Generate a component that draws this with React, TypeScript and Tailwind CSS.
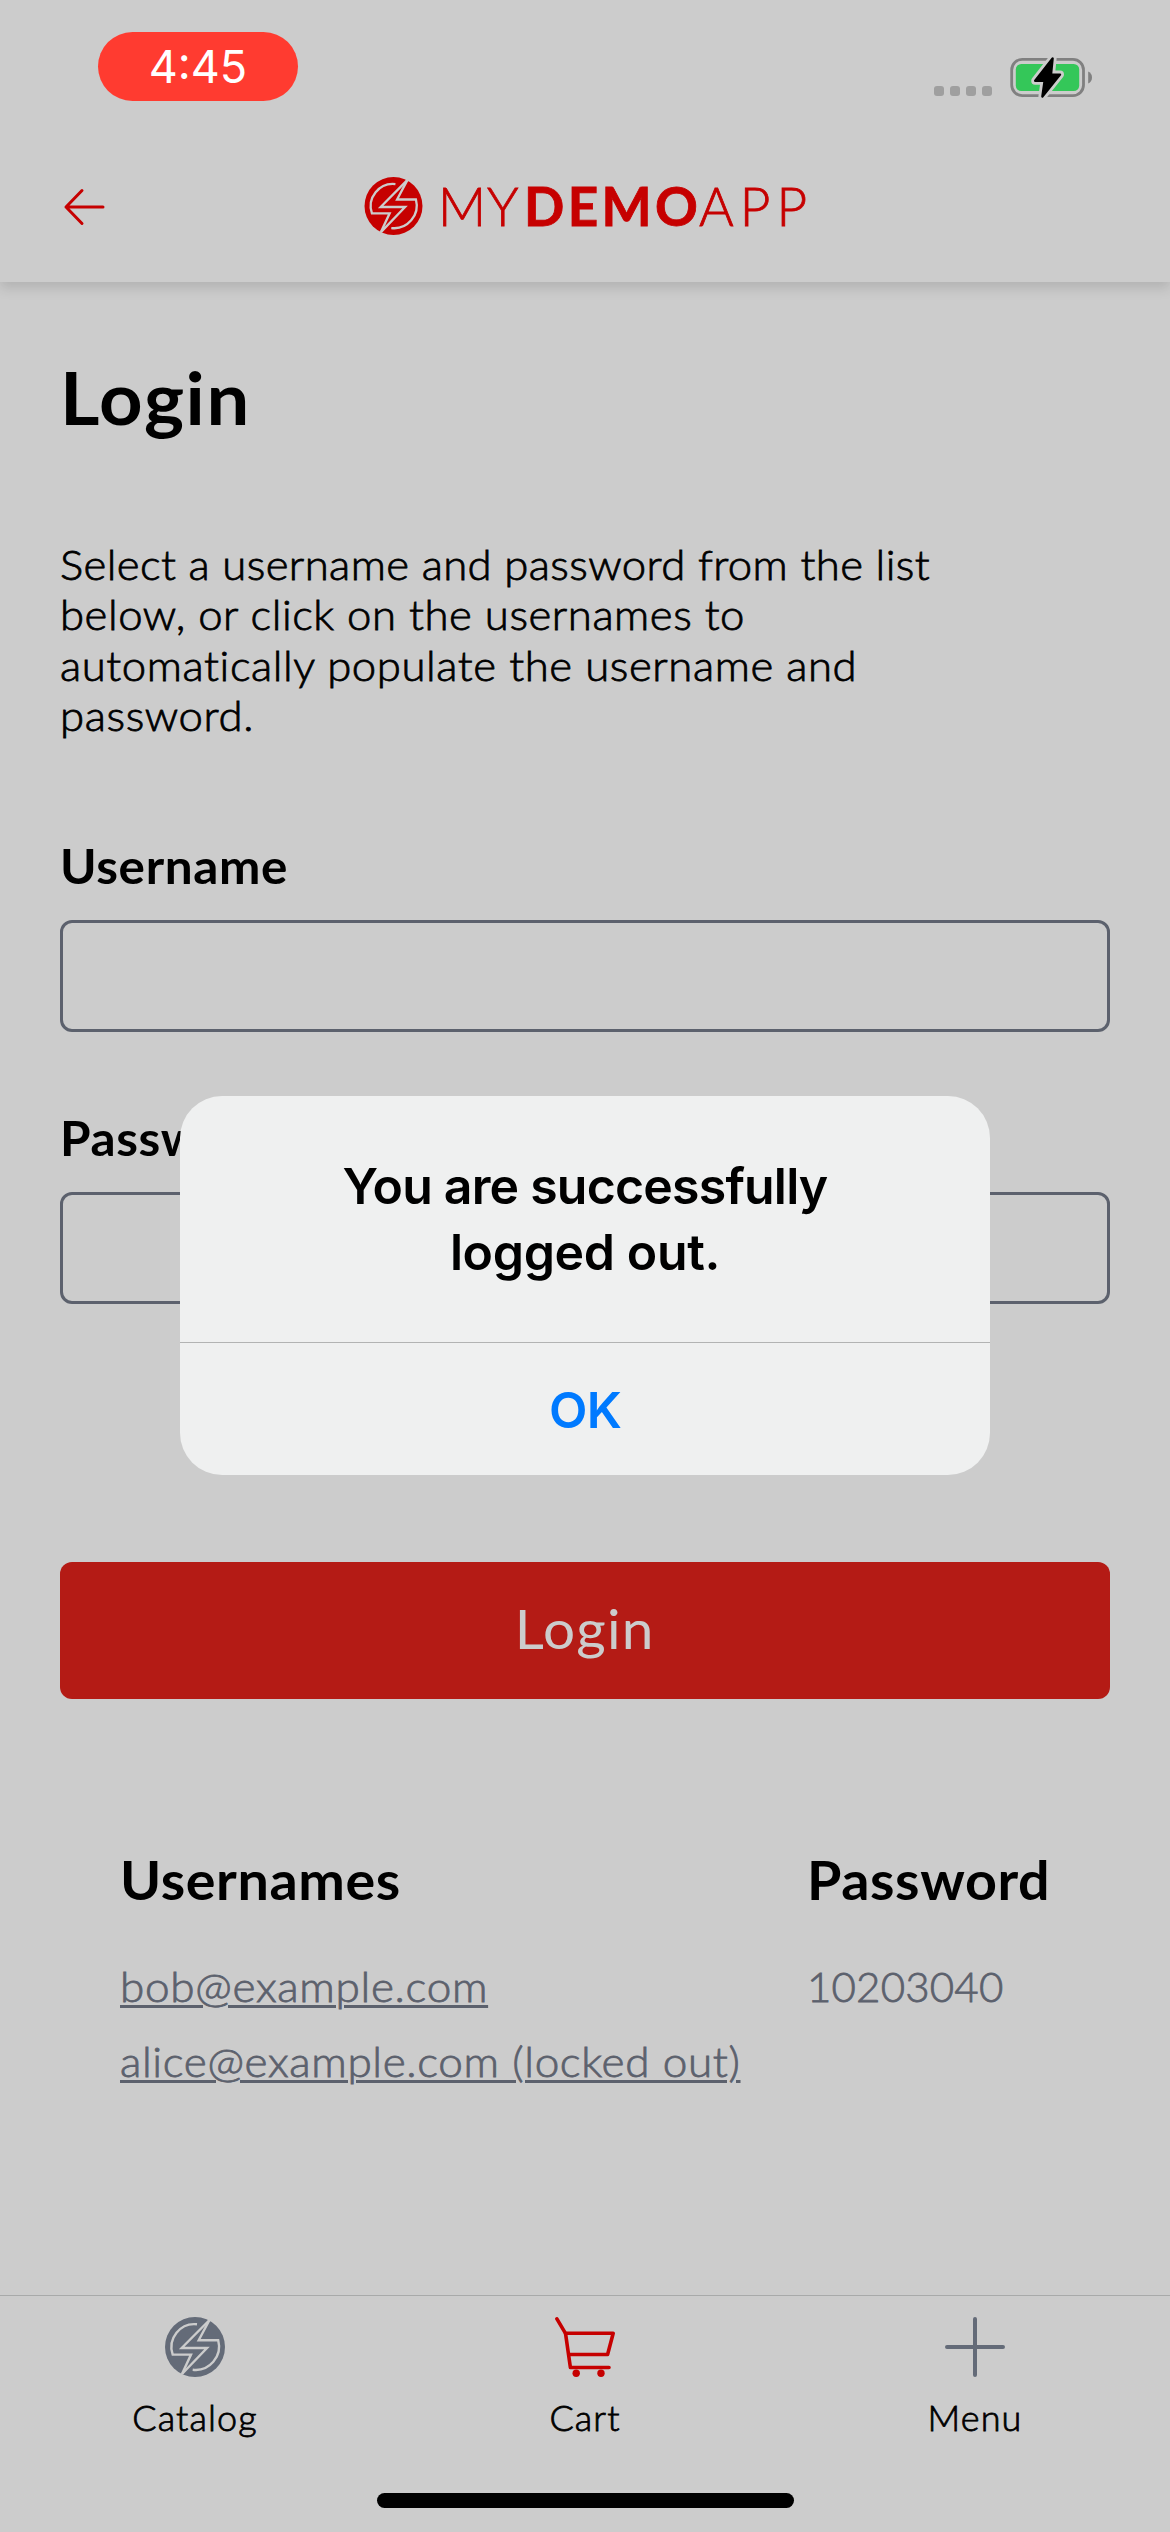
import type { ReactNode } from "react";

const light = "font-light [-webkit-text-stroke:0.8px_currentColor]";

function BoltLogo({ className }: { className: string }) {
  return (
    <svg viewBox="0 0 60 60" className={className}>
      <circle cx="30" cy="30" r="30" fill="currentColor" />
      <g fill="none" stroke="#cccccc" strokeWidth="2.4" strokeLinejoin="miter">
        <path d="M32 7.3A23 23 0 0 0 7.7 37.6H26L17 57" />
        <path d="M44.5 3L16.7 31H42L17 57" />
        <path d="M44.5 3L33.7 23.3H53.2A23.5 23.5 0 0 1 27.7 52.8" />
      </g>
    </svg>
  );
}

function Battery() {
  return (
    <svg viewBox="0 0 86 44" className="h-[44px] w-[86px]">
      <rect x="3.7" y="3.4" width="71.8" height="36.2" rx="10.5" fill="none" stroke="#808080" strokeWidth="2.8" />
      <rect x="7.8" y="8" width="63.4" height="27" rx="5.5" fill="#34c759" />
      <path d="M80.2 15.6c2.6 1 3.8 3.4 3.8 6s-1.2 5-3.8 6z" fill="#808080" />
      <path d="M44.6 2.5L43 18.6H52L34.4 40.5L36.6 24.8H27.2Z" fill="#cccccc" stroke="#cccccc" strokeWidth="8" strokeLinejoin="round" />
      <path d="M44.6 2.5L43 18.6H52L34.4 40.5L36.6 24.8H27.2Z" fill="#000" stroke="#000" strokeWidth="2.4" strokeLinejoin="round" />
    </svg>
  );
}

function StatusBar() {
  return (
    <div className="flex h-[132px] items-start justify-between pl-[98px] pr-[76px]">
      <div className="mt-8 flex h-[69px] w-[200px] items-center justify-center rounded-[35px] bg-[#ff3b30] font-['Inter',sans-serif] text-[45px] leading-[54px] text-white">
        4:45
      </div>
      <div className="mt-[56px] flex items-start">
        <div className="mr-4 mt-[30px] flex gap-1.5">
          <span className="h-2.5 w-2.5 rounded-[3px] bg-[#9f9f9f]" />
          <span className="h-2.5 w-2.5 rounded-[3px] bg-[#9f9f9f]" />
          <span className="h-2.5 w-2.5 rounded-[3px] bg-[#9f9f9f]" />
          <span className="h-2.5 w-2.5 rounded-[3px] bg-[#9f9f9f]" />
        </div>
        <Battery />
      </div>
    </div>
  );
}

function NavBar() {
  return (
    <div className="flex h-[150px] items-start pl-[62px] pt-[45px] text-[#c60000]">
      <svg viewBox="0 0 44 40" className="mr-[258px] mt-[10px] h-[40px] w-[44px]" fill="none" stroke="currentColor" strokeWidth="3" strokeLinecap="round" strokeLinejoin="round">
        <path d="M41 20H4M20 3.500L4 20L20 36.500" />
      </svg>
      <BoltLogo className="h-[58px] w-[59px]" />
      <div className="-mt-[3px] ml-[15px] flex whitespace-nowrap text-[53px] leading-[64px]">
        <span className={`w-[86px] tracking-[1px] ${light}`}>MY</span>
        <span className="w-[175px] font-bold tracking-[3.4px] [-webkit-text-stroke:0.8px_currentColor]">DEMO</span>
        <span className={`tracking-[6px] ${light}`}>APP</span>
      </div>
    </div>
  );
}

function Field({ label }: { label: string }) {
  return (
    <label className="block">
      <span className="block origin-left scale-x-[1.03] text-[48px] font-bold leading-[58px] tracking-[0.6px]">{label}</span>
      <input className="mt-[24.5px] block h-[112px] w-full rounded-[12px] border-[3px] border-[#5c616d] bg-transparent px-6 text-[42px] outline-none" />
    </label>
  );
}

function Tab({ label, children }: { label: string; children: ReactNode }) {
  return (
    <div className="flex flex-1 flex-col items-center">
      {children}
      <span className={`mt-[18px] text-[36px] leading-[44px] tracking-[1.1px] ${light}`}>{label}</span>
    </div>
  );
}

function Dialog() {
  return (
    <div role="dialog" className="absolute left-[180px] top-[1096px] flex h-[379px] w-[810px] flex-col rounded-[42px] bg-[#eff0f0] text-center font-['Inter',sans-serif] text-[50px] font-semibold">
      <div className="h-[247px] border-b border-[#b2b3b3] pt-[57px] leading-[66px]">
        <p className="tracking-[-0.8px]">You are successfully</p>
        <p className="tracking-[-0.35px]">logged out.</p>
      </div>
      <button className="flex-1 pt-0.5 tracking-[-0.8px] text-[#007aff]">OK</button>
    </div>
  );
}

export default function App() {
  return (
    <div className="relative flex h-[2532px] w-[1170px] flex-col overflow-hidden bg-[#cccccc] font-['Lato',sans-serif] text-black">
      <header className="relative h-[282px] shadow-[0_6px_12px_rgba(0,0,0,0.13)]">
        <StatusBar />
        <NavBar />
      </header>

      <main className="flex-1 px-[60px] pt-[70px]">
        <h1 className="origin-left scale-x-[1.04] text-[73px] font-bold leading-[90px] tracking-[1.5px]">Login</h1>
        <p className={`mt-[97px] origin-left scale-x-[1.04] text-[42px] leading-[50.4px] ${light}`}>
          <span className="block tracking-[0.38px]">Select a username and password from the list</span>
          <span className="block tracking-[0.53px]">below, or click on the usernames to</span>
          <span className="block tracking-[0.57px]">automatically populate the username and</span>
          <span className="block tracking-[0.6px]">password.</span>
        </p>
        <div className="mt-[96.500px]">
          <Field label="Username" />
        </div>
        <div className="mt-[77.500px]">
          <Field label="Password" />
        </div>
        <button className="mt-[258px] block h-[137px] w-full rounded-[12px] bg-[#b41b15] pb-[3px] text-[54px] text-[#cccccc]">
          <span className="inline-block scale-x-[1.05] tracking-[1.2px]">Login</span>
        </button>
        <div className="mt-[148px] flex pl-[60px]">
          <section className="w-[687px]">
            <h2 className="origin-left scale-x-[1.03] text-[54px] font-bold leading-[66px] tracking-[0.6px]">Usernames</h2>
            <div className={`mt-[48px] flex flex-col items-start gap-[25px] text-[42px] leading-[50px] text-[#5c616d] underline decoration-[3px] underline-offset-[3px] ${light}`}>
              <span className="origin-left scale-x-[1.05] tracking-[0.65px]">bob@example.com</span>
              <span className="origin-left scale-x-[1.05] tracking-[0.6px]">alice@example.com (locked out)</span>
            </div>
          </section>
          <section>
            <h2 className="origin-left scale-x-[1.03] text-[54px] font-bold leading-[66px] tracking-[0.6px]">Password</h2>
            <p className={`mt-[48px] text-[42px] leading-[50px] tracking-[0.2px] text-[#5c616d] ${light}`}>10203040</p>
          </section>
        </div>
      </main>

      <footer className="h-[237px] border-t border-[#a8aaaa] pt-[21px]">
        <nav className="flex">
          <Tab label="Catalog">
            <BoltLogo className="h-[60px] w-[60px] text-[#646b78]" />
          </Tab>
          <Tab label="Cart">
            <svg viewBox="0 0 60 60" className="h-[60px] w-[60px] text-[#c60000]" fill="none" stroke="currentColor" strokeWidth="3.6" strokeLinecap="round" strokeLinejoin="round">
              <path d="M1.900 1.900L10.500 16.300H58.200L52.600 37.500H14" />
              <path d="M10.500 16.300L15.400 50.500H54" />
              <circle cx="21.200" cy="56.300" r="3.700" fill="currentColor" stroke="none" />
              <circle cx="46" cy="56.300" r="3.700" fill="currentColor" stroke="none" />
            </svg>
          </Tab>
          <Tab label="Menu">
            <svg viewBox="0 0 60 60" className="h-[60px] w-[60px] text-[#646b78]" fill="none" stroke="currentColor" strokeWidth="4" strokeLinecap="round">
              <path d="M30 2V58M2 30H58" />
            </svg>
          </Tab>
        </nav>
        <div className="mx-auto mt-[54px] h-[15px] w-[417px] rounded-full bg-black" />
      </footer>

      <Dialog />
    </div>
  );
}
